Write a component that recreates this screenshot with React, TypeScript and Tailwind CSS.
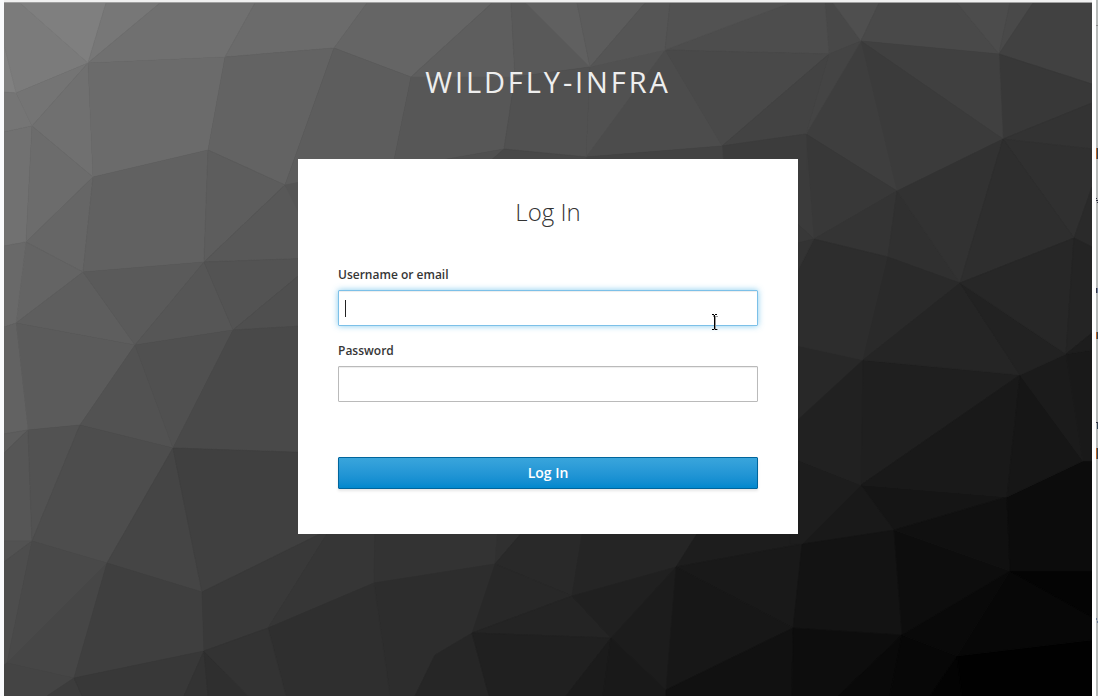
import React from "react";

type Facet = [fill: string, points: string];

// Low-poly backdrop: grey level and outline of every facet.
const facets: Facet[] = [
  ["#7b7b7b", "4,3 20,3 88,63 16,93 4,45"],
  ["#808080", "4,45 16,93 4,92"],
  ["#7f7f7f", "20,3 106,3 88,63"],
  ["#777777", "106,3 160,3 88,63"],
  ["#707070", "160,3 255,3 225,57 88,63"],
  ["#747474", "16,93 88,63 32,126"],
  ["#757575", "4,92 16,93 32,126 4,132"],
  ["#707070", "88,63 93,177 32,126"],
  ["#6b6b6b", "88,63 225,57 208,150 93,177"],
  ["#6b6b6b", "255,3 367,3 334,48 225,57"],
  ["#636363", "225,57 334,48 285,185 208,150"],
  ["#717171", "4,132 32,126 26,242 4,246"],
  ["#6c6c6c", "32,126 93,177 26,242"],
  ["#666666", "26,242 93,177 83,272"],
  ["#616161", "93,177 208,150 204,262 83,272"],
  ["#5d5d5d", "208,150 285,185 204,262"],
  ["#646464", "26,242 83,272 16,323"],
  ["#696969", "4,246 26,242 16,323 4,327"],
  ["#5e5e5e", "16,323 83,272 135,345"],
  ["#5a5a5a", "83,272 204,262 135,345"],
  ["#565656", "204,262 233,330 135,345"],
  ["#585858", "285,185 320,240 320,258 204,262"],
  ["#535353", "204,262 320,258 233,330"],
  ["#4f4f4f", "320,258 320,325 233,330"],
  ["#5b5b5b", "16,323 135,345 80,425 28,430"],
  ["#626262", "4,327 16,323 28,430 4,434"],
  ["#5d5d5d", "4,434 28,430 4,453"],
  ["#565656", "4,453 28,430 32,541 4,541"],
  ["#525252", "28,430 80,425 32,541"],
  ["#525252", "80,425 135,345 173,448"],
  ["#505050", "135,345 233,330 173,448"],
  ["#494949", "233,330 320,325 320,453 173,448"],
  ["#4d4d4d", "80,425 173,448 107,563 32,541"],
  ["#454545", "173,448 202,592 107,563"],
  ["#404040", "173,448 320,453 320,534 202,592"],
  ["#525252", "4,541 32,541 4,562"],
  ["#4d4d4d", "4,562 32,541 7,663 4,665"],
  ["#494949", "32,541 107,563 7,663"],
  ["#464646", "7,663 107,563 74,678"],
  ["#444444", "4,665 7,663 74,678 47,696 4,696"],
  ["#3f3f3f", "107,563 202,592 204,651 74,678"],
  ["#3c3c3c", "74,678 82,696 47,696"],
  ["#383838", "74,678 204,651 184,696 82,696"],
  ["#393939", "202,592 330,529 268,628 204,651"],
  ["#363636", "330,529 375,529 374,583 268,628"],
  ["#333333", "375,529 498,529 495,564 374,583"],
  ["#303030", "498,529 525,529 495,564"],
  ["#2d2d2d", "374,583 495,564 472,633 435,655 415,696 390,696"],
  ["#2f2f2f", "268,628 374,583 390,696 286,696"],
  ["#333333", "204,651 208,696 184,696"],
  ["#2f2f2f", "204,651 248,696 208,696"],
  ["#333333", "204,651 268,628 286,696 248,696"],
  ["#262626", "435,655 472,633 489,696 415,696"],
  ["#292929", "495,564 525,529 583,529 572,596"],
  ["#282828", "495,564 572,596 472,633"],
  ["#242424", "472,633 572,596 611,638"],
  ["#202020", "472,633 611,638 566,696 489,696"],
  ["#252525", "583,529 700,529 676,567 572,596"],
  ["#202020", "572,596 676,567 611,638"],
  ["#1c1c1c", "611,638 676,567 666,690"],
  ["#1b1b1b", "611,638 603,696 566,696"],
  ["#191919", "611,638 666,690 666,696 603,696"],
  ["#1d1d1d", "700,529 798,529 802,544 676,567"],
  ["#191919", "676,567 802,544 793,628"],
  ["#171717", "676,567 793,628 666,690"],
  ["#111111", "666,690 793,628 792,696 666,696"],
  ["#191919", "802,544 861,485 894,530"],
  ["#131313", "802,544 894,530 902,635 793,628"],
  ["#0d0d0d", "793,628 902,635 838,696 792,696"],
  ["#090909", "902,635 890,696 838,696"],
  ["#070707", "902,635 957,656 930,696 890,696"],
  ["#030303", "957,656 962,696 930,696"],
  ["#010101", "957,656 1092,640 1092,696 962,696"],
  ["#070707", "957,656 1010,571 1092,617 1092,640"],
  ["#040404", "1010,571 1092,571 1092,617"],
  ["#0d0d0d", "894,530 1010,571 902,635"],
  ["#090909", "902,635 1010,571 957,656"],
  ["#151515", "861,485 1007,497 894,530"],
  ["#101010", "894,530 1007,497 1010,571"],
  ["#0c0c0c", "1007,497 1083,461 1092,461 1092,571 1010,571"],
  ["#1d1d1d", "790,457 861,485 802,544 790,544"],
  ["#282828", "790,344 863,360 790,427"],
  ["#212121", "863,360 861,485 790,457 790,427"],
  ["#1f1f1f", "863,360 1020,375 861,485"],
  ["#191919", "861,485 1020,375 1007,497"],
  ["#161616", "1020,375 1083,461 1007,497"],
  ["#1b1b1b", "1020,375 1066,354 1083,461"],
  ["#191919", "1066,354 1092,350 1092,461 1083,461"],
  ["#484848", "825,3 833,3 861,41 829,54"],
  ["#4f4f4f", "833,3 879,3 861,41"],
  ["#494949", "879,3 957,3 999,54 861,41"],
  ["#4c4c4c", "957,3 1010,3 999,54"],
  ["#494949", "1010,3 1033,3 999,54"],
  ["#414141", "1033,3 1092,3 1092,84 999,54"],
  ["#383838", "999,54 1092,84 1092,103 1003,139"],
  ["#333333", "1003,139 1092,103 1092,149"],
  ["#303030", "1003,139 1092,149 1092,187 1074,238"],
  ["#2a2a2a", "1074,238 1092,187 1092,247"],
  ["#404040", "861,41 999,54 1003,139"],
  ["#3b3b3b", "861,41 1003,139 897,191"],
  ["#3e3e3e", "861,41 897,191 806,134"],
  ["#444444", "829,54 861,41 806,134"],
  ["#383838", "806,134 897,191 814,239"],
  ["#343434", "897,191 888,257 814,239"],
  ["#303030", "897,191 960,283 888,257"],
  ["#323232", "897,191 1003,139 960,283"],
  ["#2e2e2e", "1003,139 1074,238 960,283"],
  ["#2d2d2d", "814,239 888,257 863,360 790,344 790,286"],
  ["#2a2a2a", "888,257 960,283 863,360"],
  ["#252525", "960,283 1020,375 863,360"],
  ["#222222", "960,283 1066,354 1020,375"],
  ["#272727", "960,283 1074,238 1066,354"],
  ["#242424", "1074,238 1092,247 1092,333 1066,354"],
  ["#1d1d1d", "1066,354 1092,333 1092,350"],
  ["#3b3b3b", "790,137 806,134 814,239 790,217"],
  ["#383838", "790,217 814,239 790,245"],
  ["#333333", "790,245 814,239 790,286"],
  ["#4d4d4d", "790,3 825,3 829,54 665,50"],
  ["#494949", "665,50 829,54 722,146"],
  ["#434343", "722,146 829,54 806,134"],
  ["#3c3c3c", "722,146 806,134 806,170 724,170"],
  ["#4c4c4c", "665,50 722,146 586,157"],
  ["#515151", "590,67 665,50 586,157"],
  ["#434343", "586,157 722,146 724,170 586,170"],
  ["#656565", "367,3 492,3 411,77 334,48"],
  ["#5e5e5e", "492,3 511,3 515,77 411,77"],
  ["#595959", "511,3 526,3 590,67 515,77"],
  ["#606060", "526,3 577,3 590,67"],
  ["#5c5c5c", "577,3 645,3 590,67"],
  ["#555555", "645,3 670,3 665,50 590,67"],
  ["#525252", "670,3 790,3 665,50"],
  ["#5d5d5d", "334,48 411,77 392,170 300,190 285,185"],
  ["#575757", "411,77 515,77 504,149 430,162 392,170"],
  ["#505050", "504,149 480,170 392,170 430,162"],
  ["#515151", "515,77 590,67 586,157 504,149"],
  ["#484848", "504,149 586,157 586,170 480,170"],
  ["#555555", "285,185 300,182 300,215"],
];

const headingText = "m-0 font-light";
const labelText = "block text-[12px] leading-5 font-semibold text-[#363636]";
const field =
  "block h-9 w-full rounded-[1px] border px-2 text-[14px] text-[#333] outline-none";

function Backdrop() {
  return (
    <svg
      aria-hidden="true"
      className="absolute inset-0 h-full w-full"
      viewBox="4 3 1088 693"
      preserveAspectRatio="xMidYMid slice"
    >
      {facets.map(([fill, points]) => (
        <polygon
          key={points}
          points={points}
          fill={fill}
          stroke={fill}
          strokeWidth="0.6"
        />
      ))}
    </svg>
  );
}

function TextPointer() {
  return (
    <svg
      aria-hidden="true"
      className="pointer-events-none absolute right-[39px] -bottom-[5px] h-[18px] w-2"
      viewBox="0 0 8 18"
      shapeRendering="crispEdges"
    >
      <path d="M2 2h2v1h3v1h-2v12h2v1h-5v-1h2v-12h-2z" fill="#999" />
      <path d="M1 1h2v1h-2zM4 1h2v1h-2zM3 2h1v14h-1zM1 16h2v1h-2zM4 16h2v1h-2z" fill="#000" />
    </svg>
  );
}

function NeighbourWindow() {
  return (
    <svg
      aria-hidden="true"
      className="h-full w-[2px] shrink-0 bg-[#b7bab9]"
      viewBox="0 0 2 696"
      preserveAspectRatio="xMinYMin slice"
      shapeRendering="crispEdges"
    >
      <path d="M0 25h2v1h-2z" fill="#888" />
      <path d="M0 148h1v11h-1zM0 332h1v7h-1zM0 448h1v11h-1z" fill="#b5652b" />
      <path d="M1 148h1v11h-1zM1 332h1v7h-1zM1 422h1v7h-1zM1 448h1v11h-1z" fill="#345" />
      <path d="M0 198h1v1h-1zM0 200h2v1h-2zM1 202h1v1h-1zM0 288h1v5h-1zM0 422h2v1h-2z" fill="#334" />
      <path d="M1 288h1v5h-1zM0 618h1v2h-1zM1 621h1v2h-1z" fill="#6f7f9a" />
    </svg>
  );
}

export default function App() {
  return (
    <div className="flex h-screen min-h-[600px] bg-[#f9fafc] pl-1 font-['Open_Sans',sans-serif]">
      <div className="flex min-w-0 flex-1 flex-col">
        <div className="h-[3px] shrink-0 border-b border-[#a0a0a0] bg-[#f0f0f0]" />
        <main className="relative flex flex-1 flex-col items-center overflow-hidden bg-[#333]">
          <Backdrop />
          <h1
            className={`${headingText} relative pt-[59px] text-[29px] leading-10 font-normal tracking-widest text-[#eee] uppercase`}
          >
            wildfly-infra
          </h1>
          <section className="relative mt-[57px] w-full max-w-[500px] bg-white px-10 pt-[35px] pb-[45px]">
            <h2 className={`${headingText} text-center text-[24px] leading-9 text-[#333]`}>
              Log In
            </h2>
            <form className="mt-[35px]" onSubmit={(e) => e.preventDefault()}>
              <label htmlFor="username" className={labelText}>
                Username or email
              </label>
              <div className="relative mt-[5px]">
                <input
                  id="username"
                  type="text"
                  autoComplete="off"
                  className={`${field} border-[#7cc0e8] caret-transparent shadow-[inset_0_1px_1px_rgba(0,0,0,0.075),0_0_6px_rgba(102,190,233,0.8)]`}
                />
                <span className="pointer-events-none absolute top-[10px] left-[7px] h-[17px] w-px bg-[#222]" />
                <TextPointer />
              </div>
              <label htmlFor="password" className={`${labelText} mt-[15px]`}>
                Password
              </label>
              <input
                id="password"
                type="password"
                className={`${field} mt-[5px] border-[#bababa] shadow-[inset_0_1px_1px_rgba(0,0,0,0.075)]`}
              />
              <button
                type="submit"
                className="mt-[55px] block h-8 w-full rounded-[1px] border border-[#00659c] bg-linear-to-b from-[#39a5dc] to-[#0088ce] text-[14px] leading-5 font-semibold text-white shadow-[0_2px_3px_rgba(3,3,3,0.1)]"
              >
                Log In
              </button>
            </form>
          </section>
        </main>
      </div>
      <div className="w-1 shrink-0 bg-white" />
      <NeighbourWindow />
    </div>
  );
}
